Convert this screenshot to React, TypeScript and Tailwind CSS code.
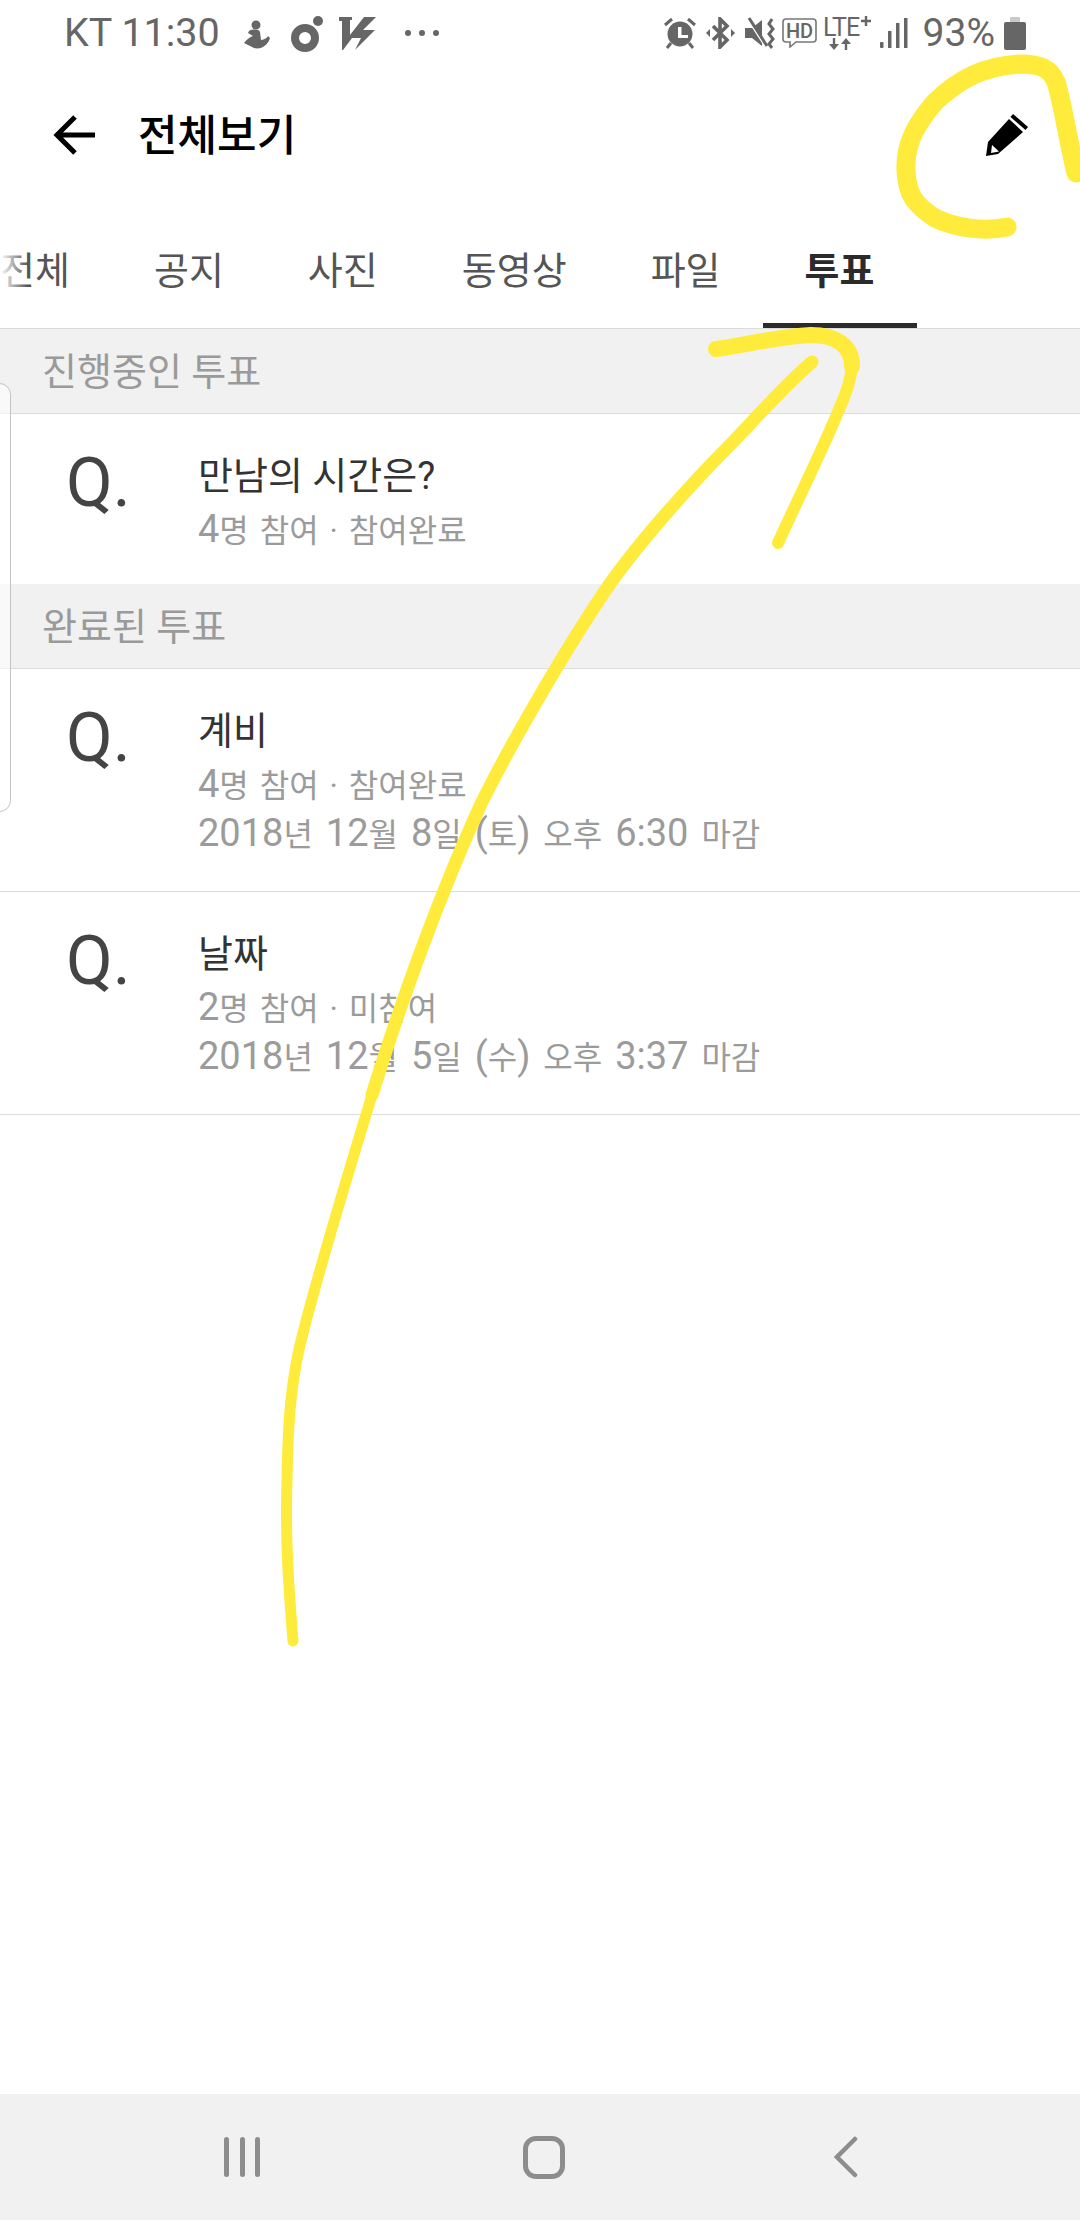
import React from "react";

const FONT = 'font-["Roboto","Noto_Sans_CJK_KR",sans-serif]';

const tabs = ["전체", "공지", "사진", "동영상", "파일", "투표"];

type Vote = { title: string; meta: string; deadline?: string };

const ongoing: Vote[] = [{ title: "만남의 시간은?", meta: "4명 참여 · 참여완료" }];

const finished: Vote[] = [
  { title: "계비", meta: "4명 참여 · 참여완료", deadline: "2018년 12월 8일 (토) 오후 6:30 마감" },
  { title: "날짜", meta: "2명 참여 · 미참여", deadline: "2018년 12월 5일 (수) 오후 3:37 마감" },
];

// latin digits sit larger than the hangul next to them
const MixedText = ({ text }: { text: string }) => (
  <>
    {text.split(/([0-9:()]+)/).map((part, i) =>
      i % 2 === 1 ? (
        <span key={i} className="text-[38px]">
          {part}
        </span>
      ) : (
        <span key={i}>{part}</span>
      ),
    )}
  </>
);

// status bar glyphs, all in the same grey
const StatusLeftIcons = () => (
  <div className="flex items-center ml-[24px]">
    <svg width="26" height="30" viewBox="0 0 26 30" fill="#666" className="mt-[4px]">
      <circle cx="12" cy="5" r="4.5" />
      <path d="M5 11C8 9 15 9 16 12L17 20C20 20 24 17 24 16L26 18C24 25 17 30 10 28L0 23C2 20 6 17 9 16L4 13Z" />
    </svg>
    <svg width="34" height="38" viewBox="0 0 34 38" fill="#666" className="ml-[21px] mt-[1px]">
      <path
        fillRule="evenodd"
        d="M14 9a14 14 0 1 0 0 28a14 14 0 1 0 0-28ZM14 17a6 6 0 1 1 0 12a6 6 0 1 1 0-12Z"
      />
      <circle cx="27" cy="6" r="5" />
    </svg>
    <svg width="38" height="34" viewBox="0 0 38 34" fill="#666" className="ml-[14px]">
      <path d="M0 1H13V4H11V19L25 1H37L24 14H36L16 34L22 22H13L4 34H3V5H0Z" />
    </svg>
    <div className="flex gap-[8px] ml-[28px]">
      <span className="w-[6px] h-[6px] rounded-full bg-[#666]" />
      <span className="w-[6px] h-[6px] rounded-full bg-[#666]" />
      <span className="w-[6px] h-[6px] rounded-full bg-[#666]" />
    </div>
  </div>
);

const StatusRightIcons = () => (
  <div className="flex items-center">
    <svg width="32" height="32" viewBox="0 0 32 32" className="mr-[10px]">
      <circle cx="16" cy="17" r="12.5" fill="#666" />
      <path d="M14 10h3.5v8H24v3H14z" fill="#fff" />
      <path d="M1 8L8 2M24 2L31 8M7 26L3 31M25 26L29 31" stroke="#666" strokeWidth="3" fill="none" />
    </svg>
    <svg width="29" height="32" viewBox="0 0 29 32" className="mr-[10px]">
      <path d="M7 9L21 23L14 30V2L21 9L7 23" stroke="#666" strokeWidth="3.6" fill="none" />
      <path d="M0 16L4 12V20ZM29 16L25 12V20Z" fill="#666" />
    </svg>
    <svg width="31" height="32" viewBox="0 0 31 32" className="mr-[6px]">
      <path d="M0 11H7L17 3V29L7 21H0Z" fill="#666" />
      <path d="M3 2L21 30" stroke="#fff" strokeWidth="2.5" />
      <path d="M4 1L22 29" stroke="#666" strokeWidth="3" />
      <path
        d="M27 2L24 7L28 12L24 17L28 22L24 27L27 31"
        stroke="#666"
        strokeWidth="3"
        fill="none"
      />
    </svg>
    <svg width="35" height="30" viewBox="0 0 35 30" className="mr-[6px]">
      <path
        d="M4 1H31A3 3 0 0 1 34 4V21A3 3 0 0 1 31 24H14L8 29V24H4A3 3 0 0 1 1 21V4A3 3 0 0 1 4 1Z"
        stroke="#777"
        strokeWidth="1.6"
        fill="none"
      />
      <text x="17.5" y="20" textAnchor="middle" fontSize="20" fill="#666" fontFamily="Roboto" fontWeight="500">
        HD
      </text>
    </svg>
    <svg width="50" height="40" viewBox="0 -4 50 40" className="mr-[7px] mb-[4px]">
      <text x="0" y="21" fontSize="25" fill="#666" fontFamily="Roboto" letterSpacing="-1">
        LTE
      </text>
      <path d="M43 1V11M38 6H48" stroke="#666" strokeWidth="2.4" />
      <path d="M11 23V30" stroke="#666" strokeWidth="2.4" />
      <path d="M6 29H16L11 35Z" fill="#666" />
      <path d="M23 35V28" stroke="#666" strokeWidth="2.4" />
      <path d="M18 29H28L23 23Z" fill="#666" />
    </svg>
    <svg width="28" height="30" viewBox="0 0 28 30" fill="#666" className="mr-[15px]">
      <rect x="0" y="24" width="3.5" height="6" rx="1" />
      <rect x="8" y="13" width="3.5" height="17" />
      <rect x="16" y="5" width="3.5" height="25" />
      <rect x="24" y="0" width="3.5" height="30" />
    </svg>
    <span className="text-[39px] leading-none text-[#666]">93%</span>
    <svg width="22" height="33" viewBox="0 0 22 33" className="ml-[9px]">
      <rect x="6" y="0" width="10" height="6" rx="1" fill="#c9c9c9" />
      <rect x="0" y="5" width="22" height="28" rx="2" fill="#666" />
    </svg>
  </div>
);

const SectionHeader = ({ label }: { label: string }) => (
  <div className="h-[85px] flex items-center pl-[42px] pt-[3px] bg-[#f1f1f1] border-b border-[#dcdcdc] text-[38px] text-[#9a9a9a]">
    {label}
  </div>
);

const VoteRow = ({ vote }: { vote: Vote }) => (
  <div className={`flex pl-[66px] pt-[36px] border-[#dcdcdc] ${vote.deadline ? "border-b pb-[33px]" : "pb-[30px]"}`}>
    <div className="w-[132px] shrink-0 text-[68px] leading-[50px] text-[#444] pt-[8px]">Q.</div>
    <div className="flex flex-col">
      <div className="text-[38px] leading-[50px] text-[#333] pt-[1px] -mb-[1px]">{vote.title}</div>
      <div className="h-[49px] text-[32px] leading-[49px] text-[#9b9b9b] mt-[5px] [word-spacing:3px]">
        <MixedText text={vote.meta} />
      </div>
      {vote.deadline && (
        <div className="h-[49px] text-[32px] leading-[49px] text-[#9b9b9b] [word-spacing:5px]">
          <MixedText text={vote.deadline} />
        </div>
      )}
    </div>
  </div>
);

// highlighter marks drawn on top of the page
const Scribbles = () => (
  <svg
    className="absolute left-0 top-0 pointer-events-none"
    width="1080"
    height="2220"
    viewBox="0 0 1080 2220"
    fill="none"
    stroke="#ffeb3b"
    strokeLinecap="round"
    strokeLinejoin="round"
  >
    <path
      strokeWidth="19"
      d="M1076 173C1068 140 1062 100 1056 82C1050 68 1040 64 1020 64C985 66 960 78 935 102C915 125 905 145 906 170C907 195 915 205 935 218C955 228 985 232 1007 227"
    />
    <path strokeWidth="11" d="M293 1641C289 1590 285 1540 287 1480C288 1420 291 1385 300 1345C312 1295 340 1200 372 1095" />
    <path strokeWidth="13" d="M372 1095C395 1020 435 905 481 804C510 745 565 650 607 588C622 566 637 548 652 530C680 497 705 470 730 445C757 417 785 385 812 362" />
    <path strokeWidth="16" d="M716 349C745 345 775 337 811 335C835 335 852 345 852 366" />
    <path strokeWidth="12" d="M852 366C850 385 845 395 838 412C820 455 800 495 778 543" />
  </svg>
);

export default function App() {
  return (
    <div className={`relative w-[1080px] h-[2220px] overflow-hidden bg-white flex flex-col ${FONT}`}>
      {/* status bar */}
      <div className="h-[66px] flex items-center justify-between pl-[64px] pr-[54px] shrink-0">
        <div className="flex items-center">
          <span className="text-[39.5px] leading-none text-[#666]">KT 11:30</span>
          <StatusLeftIcons />
        </div>
        <StatusRightIcons />
      </div>

      {/* app bar */}
      <div className="h-[138px] flex items-center justify-between pl-[53px] pr-[52px] shrink-0">
        <div className="flex items-center">
          <svg width="42" height="42" viewBox="0 0 42 42" fill="none" stroke="#000" strokeWidth="5">
            <path d="M42 21H4M22 3L4 21L22 39" />
          </svg>
          <span className="ml-[43px] mt-[3px] text-[43px] font-medium text-black leading-none">전체보기</span>
        </div>
        <svg width="42" height="42" viewBox="0 0 42 42" fill="#000">
          <path d="M27 0L42 13L39.5 16L24.5 3Z" />
          <path d="M23 5L37 18L12 40L0 42L2 28ZM6 31L5 39L13 37.5Z" fillRule="evenodd" />
        </svg>
      </div>

      {/* tabs */}
      <div className="relative h-[125px] flex border-b border-[#dcdcdc] overflow-hidden shrink-0">
        <div className="flex -ml-[42px]">
          {tabs.map((tab) => (
            <div
              key={tab}
              className={`relative px-[42px] pt-[44px] text-[38px] leading-[46px] whitespace-nowrap ${
                tab === "투표" ? "font-bold text-[#2b2b2b]" : "text-[#555]"
              }`}
            >
              {tab}
              {tab === "투표" && <div className="absolute left-0 right-0 bottom-0 h-[5px] bg-[#2b2b2b]" />}
            </div>
          ))}
        </div>
        <div className="absolute left-0 top-0 bottom-0 w-[28px] bg-gradient-to-r from-white to-transparent" />
      </div>

      <SectionHeader label="진행중인 투표" />
      {ongoing.map((vote) => (
        <VoteRow key={vote.title} vote={vote} />
      ))}
      <SectionHeader label="완료된 투표" />
      {finished.map((vote) => (
        <VoteRow key={vote.title} vote={vote} />
      ))}

      {/* edge of the side drawer handle */}
      <div className="absolute left-[-12px] top-[383px] w-[23px] h-[429px] rounded-[12px] border border-[#c4c4c4] bg-white/60" />

      {/* navigation bar */}
      <div className="mt-auto h-[126px] grid grid-cols-3 pl-[91px] pr-[83px] items-center bg-[#f1f1f1] shrink-0">
        <svg width="36" height="42" viewBox="0 0 36 42" fill="#8d8d8d" className="justify-self-center">
          <rect x="0" y="1" width="5" height="40" rx="2.5" />
          <rect x="16" y="1" width="5" height="40" rx="2.5" />
          <rect x="31" y="1" width="5" height="40" rx="2.5" />
        </svg>
        <div className="justify-self-center w-[42px] h-[43px] rounded-[13px] border-[5px] border-[#8d8d8d]" />
        <svg width="24" height="42" viewBox="0 0 24 42" fill="none" stroke="#8d8d8d" strokeWidth="4.5" strokeLinecap="round" className="justify-self-center">
          <path d="M21 3L3 21L21 39" />
        </svg>
      </div>

      <Scribbles />
    </div>
  );
}
